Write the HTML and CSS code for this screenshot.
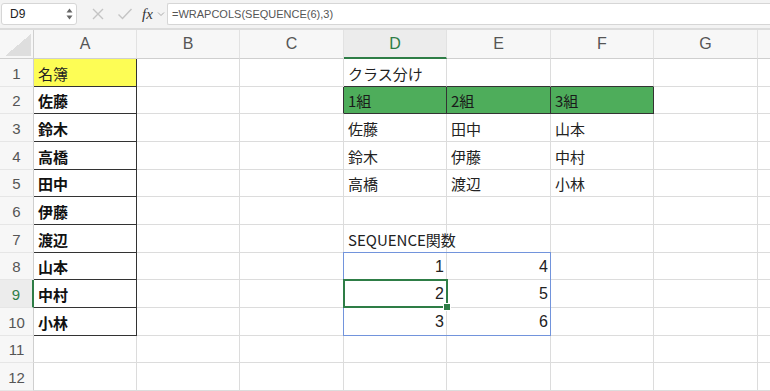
FILE: index.html
```html
<!DOCTYPE html>
<html lang="ja">
<head>
<meta charset="utf-8">
<link rel="stylesheet" href="styles.css">
</head>
<body>
<div class="fbar">
  <div class="namebox"><span class="nm">D9</span><span class="spin"><svg width="7" height="14" viewBox="0 0 7 14"><path d="M0.5 5.5 L3.5 1.5 L6.5 5.5 Z" fill="#666"/><path d="M0.5 8.5 L3.5 12.5 L6.5 8.5 Z" fill="#666"/></svg></span></div>
  <div class="ficons">
    <svg class="ic-x" width="14" height="14" viewBox="0 0 14 14"><path d="M2 2 L12 12 M12 2 L2 12" stroke="#c4c4c4" stroke-width="1.4" fill="none"/></svg>
    <svg class="ic-ok" width="16" height="14" viewBox="0 0 16 14"><path d="M1.5 7.5 L5.5 11.5 L14.5 2" stroke="#c4c4c4" stroke-width="1.4" fill="none"/></svg>
    <span class="fx">fx</span>
    <svg class="ic-chev" width="8" height="6" viewBox="0 0 8 6"><path d="M1 1.5 L4 4.5 L7 1.5" stroke="#aaa" stroke-width="1" fill="none"/></svg>
  </div>
  <div class="formula">=WRAPCOLS(SEQUENCE(6),3)</div>
</div>
<div class="sheet">
  <div class="corner"></div>
  <div class="ch">A</div><div class="ch">B</div><div class="ch">C</div><div class="ch sel">D</div><div class="ch">E</div><div class="ch">F</div><div class="ch">G</div><div class="ch last"></div>

  <div class="rh">1</div><div class="c a yel">名簿</div><div class="c"></div><div class="c"></div><div class="c tb">クラス分け</div><div class="c tb"></div><div class="c tb"></div><div class="c"></div><div class="c last"></div>
  <div class="rh">2</div><div class="c a b">佐藤</div><div class="c"></div><div class="c rb"></div><div class="c grn">1組</div><div class="c grn">2組</div><div class="c grn">3組</div><div class="c"></div><div class="c last"></div>
  <div class="rh">3</div><div class="c a b">鈴木</div><div class="c"></div><div class="c"></div><div class="c">佐藤</div><div class="c">田中</div><div class="c">山本</div><div class="c"></div><div class="c last"></div>
  <div class="rh">4</div><div class="c a b">高橋</div><div class="c"></div><div class="c"></div><div class="c">鈴木</div><div class="c">伊藤</div><div class="c">中村</div><div class="c"></div><div class="c last"></div>
  <div class="rh">5</div><div class="c a b">田中</div><div class="c"></div><div class="c"></div><div class="c">高橋</div><div class="c">渡辺</div><div class="c">小林</div><div class="c"></div><div class="c last"></div>
  <div class="rh">6</div><div class="c a b">伊藤</div><div class="c"></div><div class="c"></div><div class="c"></div><div class="c"></div><div class="c"></div><div class="c"></div><div class="c last"></div>
  <div class="rh">7</div><div class="c a b">渡辺</div><div class="c"></div><div class="c"></div><div class="c">SEQUENCE関数</div><div class="c"></div><div class="c"></div><div class="c"></div><div class="c last"></div>
  <div class="rh">8</div><div class="c a b">山本</div><div class="c"></div><div class="c"></div><div class="c num anchor"><span class="range"></span>1</div><div class="c num">4</div><div class="c"></div><div class="c"></div><div class="c last"></div>
  <div class="rh sel">9</div><div class="c a b">中村</div><div class="c"></div><div class="c"></div><div class="c num anchor"><span class="cursor"><span class="handle"></span></span>2</div><div class="c num">5</div><div class="c"></div><div class="c"></div><div class="c last"></div>
  <div class="rh">10</div><div class="c a b">小林</div><div class="c"></div><div class="c"></div><div class="c num">3</div><div class="c num">6</div><div class="c"></div><div class="c"></div><div class="c last"></div>
  <div class="rh">11</div><div class="c"></div><div class="c"></div><div class="c"></div><div class="c"></div><div class="c"></div><div class="c"></div><div class="c"></div><div class="c last"></div>
  <div class="rh">12</div><div class="c"></div><div class="c"></div><div class="c"></div><div class="c"></div><div class="c"></div><div class="c"></div><div class="c"></div><div class="c last"></div>
</div>
</body>
</html>
```
FILE: styles.css
```css
html, body {
  margin: 0;
  padding: 0;
  background: #ffffff;
  overflow: hidden;
}
body {
  font-family: "Liberation Sans", "Noto Sans CJK JP", sans-serif;
  color: #1a1a1a;
  width: 770px;
  height: 391px;
}
.fbar {
  height: 28px;
  background: #f3f3f3;
  border-bottom: 2px solid #dcdcdc;
  display: flex;
  align-items: center;
  box-sizing: content-box;
}
.namebox {
  margin-left: 1px;
  width: 76px;
  height: 22px;
  box-sizing: border-box;
  background: #fff;
  border: 1px solid #d6d6d6;
  border-radius: 3px;
  display: flex;
  align-items: center;
  justify-content: space-between;
  padding: 0 3px 0 8px;
}
.nm {
  font-size: 12px;
  color: #222;
}
.spin {
  display: flex;
  align-items: center;
}
.ficons {
  display: flex;
  align-items: center;
  width: 90px;
  box-sizing: border-box;
  padding-left: 14px;
}
.ic-ok { margin-left: 12px; }
.fx {
  margin-left: 9px;
  font-family: "Liberation Serif", serif;
  font-style: italic;
  font-size: 15px;
  color: #333;
}
.ic-chev { margin-left: 4px; }
.formula {
  flex: 1;
  height: 22px;
  box-sizing: border-box;
  background: #fff;
  border: 1px solid #d6d6d6;
  border-right: none;
  border-radius: 2px 0 0 2px;
  font-size: 11px;
  color: #555;
  padding-left: 4px;
  display: flex;
  align-items: center;
}
.sheet {
  display: grid;
  grid-template-columns: 34px 103px 103px 104px 103px 104px 103px 104px 1fr;
  grid-template-rows: 29px 28px 27px 28px 28px 27px 28px 28px 27px 28px 28px 27px 28px;
}
.corner {
  background: #f7f7f7 linear-gradient(to top left, #dedede 0, #dedede 50%, transparent 50%) no-repeat right 2px bottom 2px / 26px 22px;
  border-right: 1px solid #cfcfcf;
  border-bottom: 1px solid #cfcfcf;
}
.ch {
  background: #f7f7f7;
  border-right: 1px solid #e2e2e2;
  border-bottom: 1px solid #cfcfcf;
  display: flex;
  align-items: center;
  justify-content: center;
  font-size: 16px;
  color: #555;
}
.ch.sel {
  background: #ececec;
  color: #2e7d46;
  border-bottom: 2px solid #2e7d46;
}
.ch.last { border-right: none; }
.rh {
  background: #f7f7f7;
  border-right: 1px solid #cfcfcf;
  border-bottom: 1px solid #e6e6e6;
  display: flex;
  align-items: center;
  justify-content: center;
  font-size: 15px;
  color: #555;
  padding-top: 1px;
  box-sizing: border-box;
}
.rh.sel {
  background: #ececec;
  color: #2e7d46;
  border-right: 2px solid #2e7d46;
}
.c {
  border-right: 1px solid #dcdcdc;
  border-bottom: 1px solid #dcdcdc;
  display: flex;
  align-items: center;
  padding: 1px 4px 0 4px;
  font-size: 15px;
  font-family: "Noto Sans CJK JP", sans-serif;
  color: #222;
  white-space: nowrap;
  box-sizing: border-box;
  min-width: 0;
}
.c.last { border-right: none; }
.c.a {
  border-right-color: #333;
  border-bottom-color: #333;
}
.c.b { font-weight: 700; color: #111; }
.c.yel { background: #fdfd55; color: #222; }
.c.tb { border-bottom-color: #333; }
.c.rb { border-right-color: #333; }
.c.grn {
  background: #4ead5b;
  border-right-color: #333;
  border-bottom-color: #333;
  color: #1a1a1a;
}
.c.num {
  justify-content: flex-end;
  font-family: "Liberation Sans", sans-serif;
  font-size: 16px;
  padding-right: 2px;
}
.anchor { position: relative; }
.range {
  position: absolute;
  left: -1px;
  top: -1px;
  width: 208px;
  height: 84px;
  box-sizing: border-box;
  border: 1px solid #7294dc;
  pointer-events: none;
  z-index: 2;
}
.cursor {
  position: absolute;
  left: -1px;
  top: -1px;
  width: 105px;
  height: 29px;
  box-sizing: border-box;
  border: 2px solid #2e7d46;
  z-index: 3;
}
.handle {
  position: absolute;
  right: -5px;
  bottom: -5px;
  width: 6px;
  height: 6px;
  background: #2e7d46;
  border: 1px solid #fff;
}
```
